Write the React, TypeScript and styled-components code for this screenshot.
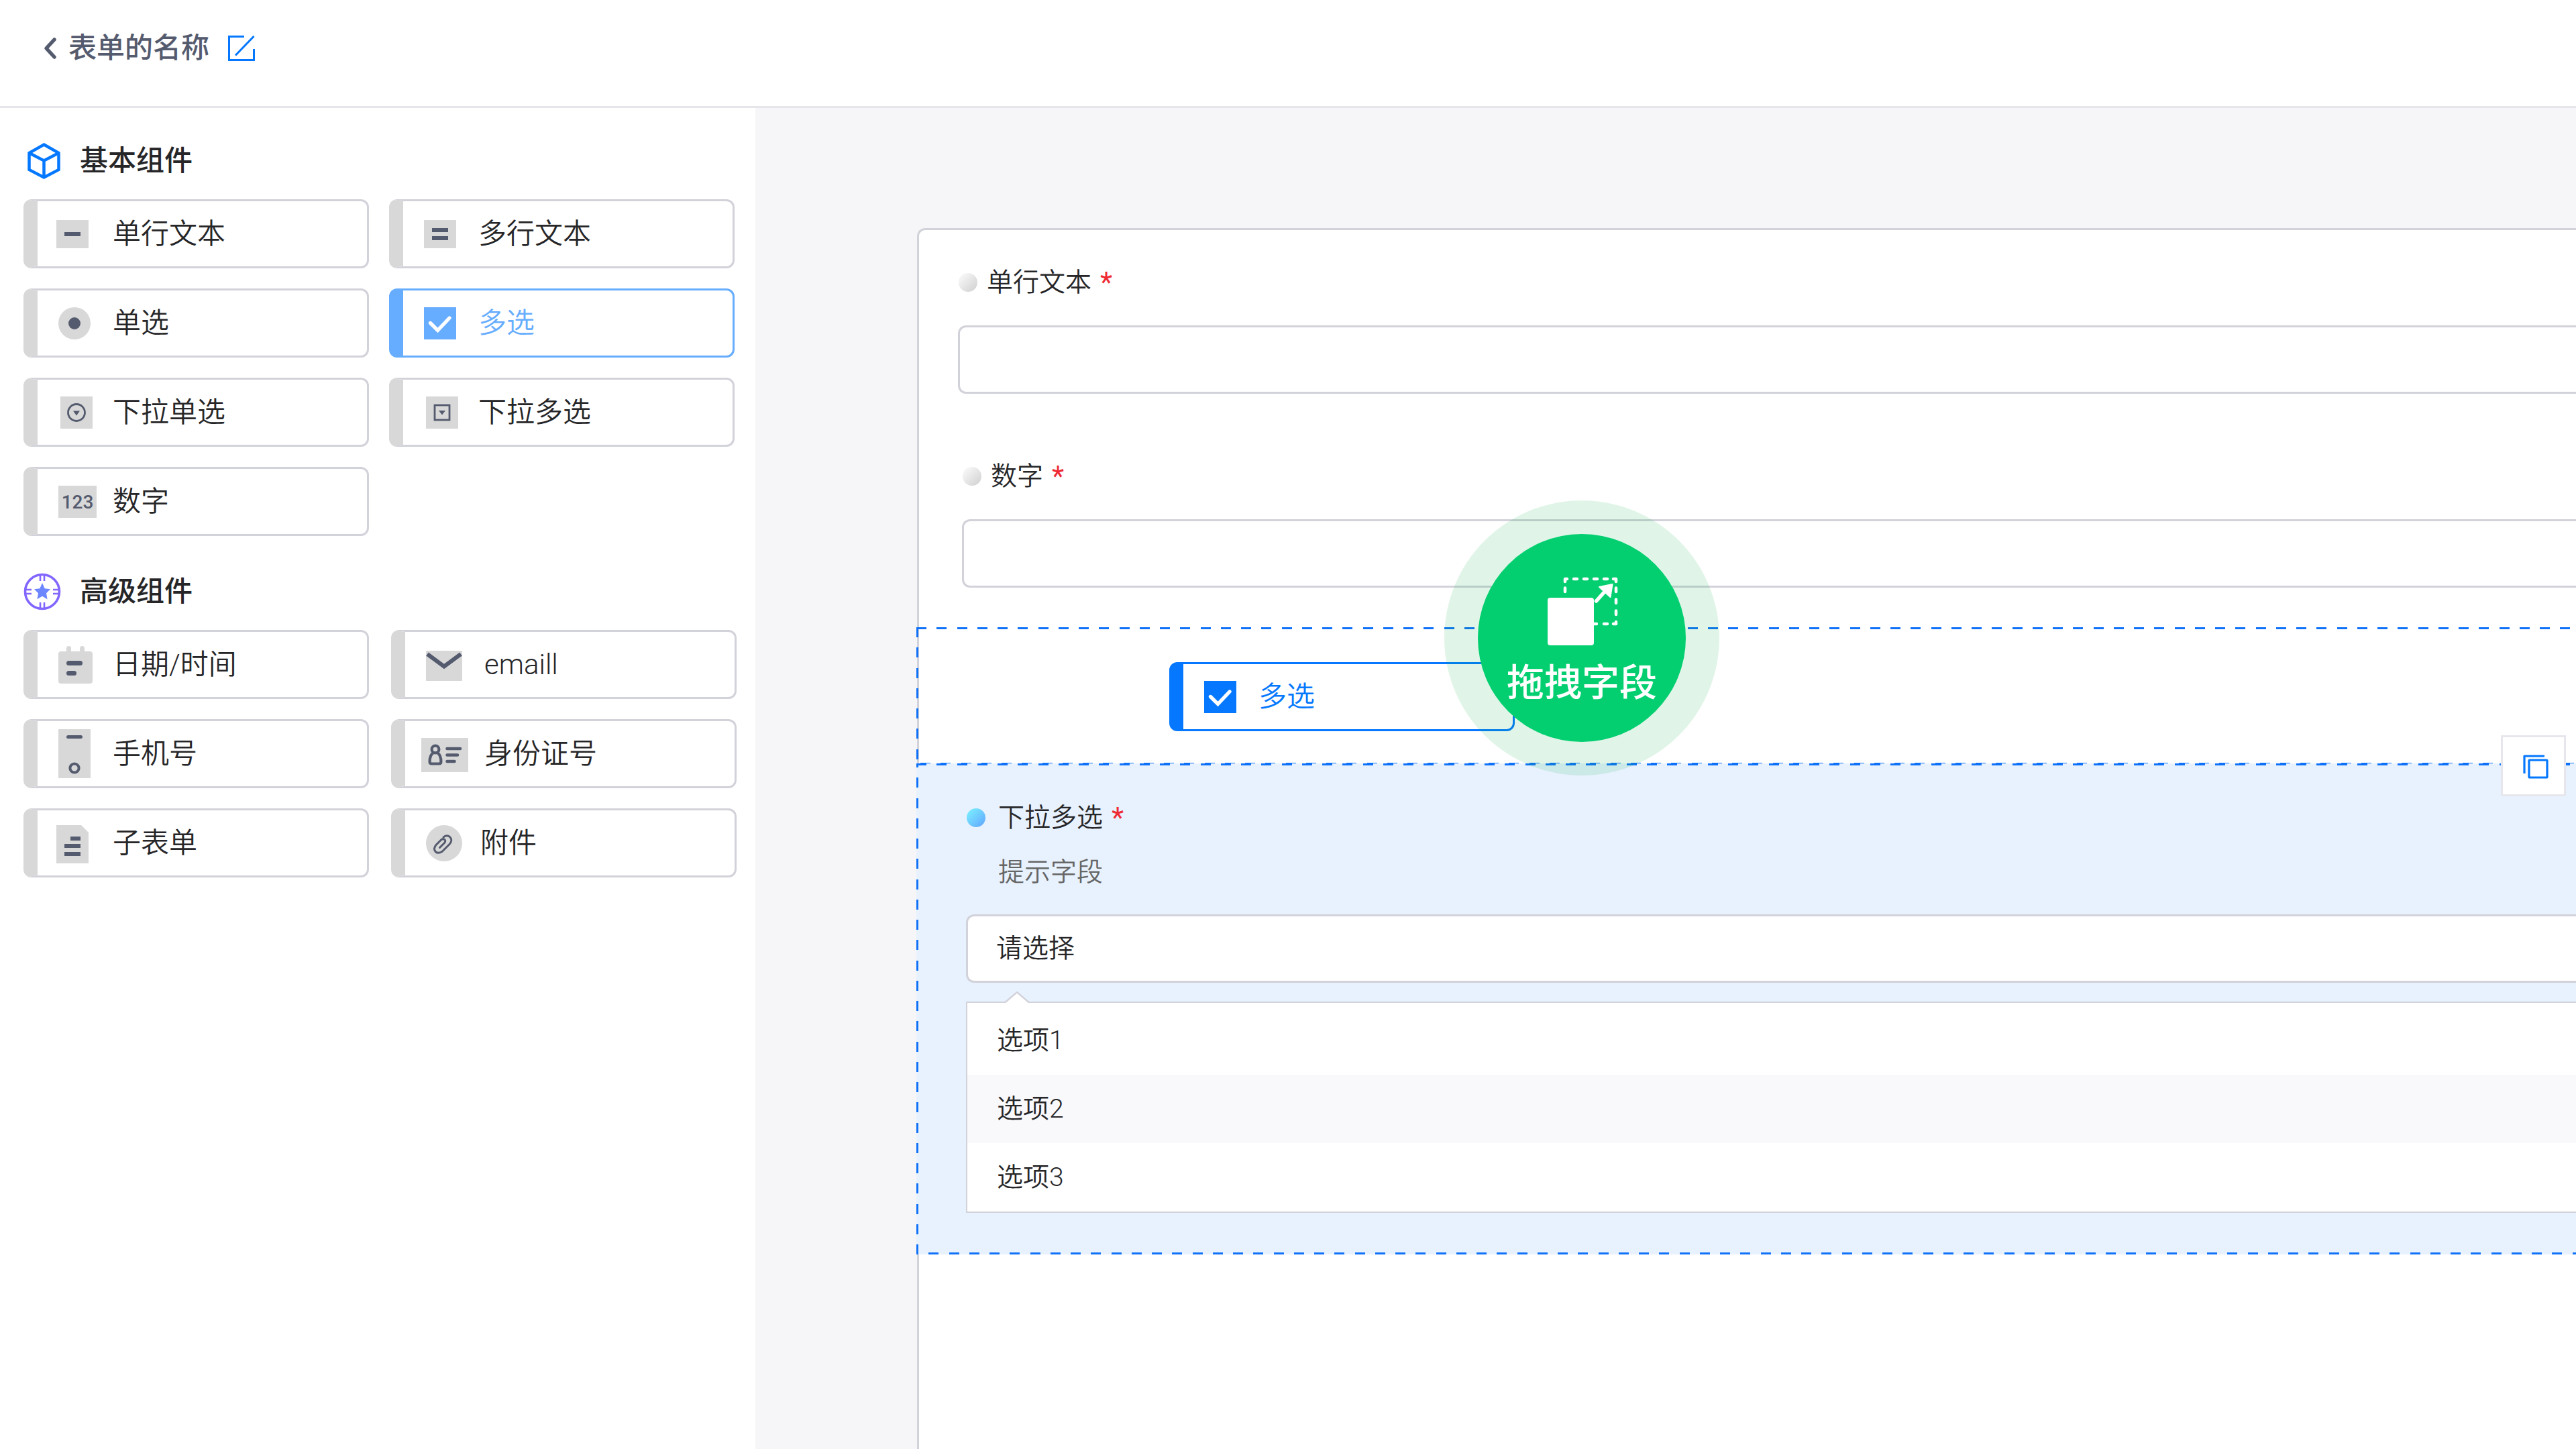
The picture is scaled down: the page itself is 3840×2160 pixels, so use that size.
import React from "react";
import styled, { createGlobalStyle, css } from "styled-components";

const ink = "#262628";
const slate = "#555b6e";
const blue = "#0578ff";
const dash = "#0f71f8";
const line = "#d2d2da";
const grey = "#d8d8d8";

const GlobalStyle = createGlobalStyle`
  * { box-sizing: border-box; }
  body {
    margin: 0;
    background: #ffffff;
    color: ${ink};
    font-family: Roboto, "Noto Sans CJK SC", sans-serif;
    overflow-x: hidden;
  }
  button, input, select { font: inherit; color: inherit; }
  h1, h2, p, ul { margin: 0; padding: 0; }
`;

const Page = styled.div`
  display: flex;
  flex-direction: column;
  min-height: 100vh;
`;

const Header = styled.header`
  display: flex;
  align-items: center;
  padding: 42px 64px 56px;
  border-bottom: 3px solid #e6e6ea;
  color: ${slate};
`;

const IconButton = styled.button`
  display: flex;
  align-items: center;
  height: 60px;
  padding: 0;
  border: 0;
  background: none;
  cursor: pointer;
`;

const FormName = styled.h1`
  margin: 0 27px 0 17px;
  font-size: 42px;
  line-height: 60px;
  font-weight: 500;
`;

const Body = styled.div`
  display: flex;
  flex: 1;
`;

const Sidebar = styled.aside`
  flex: none;
  display: flex;
  flex-direction: column;
  gap: 53px;
  width: 1126px;
  padding: 49px 28px 49px 35px;
`;

const Group = styled.section`
  display: flex;
  flex-direction: column;
  gap: 27px;
`;

const GroupTitle = styled.h2`
  display: flex;
  align-items: center;
  gap: 28px;
  font-size: 42px;
  line-height: 60px;
  font-weight: 500;
`;

const Grid = styled.div<{ $gap: number }>`
  display: grid;
  grid-template-columns: repeat(2, 515px);
  gap: 30px ${(p) => p.$gap}px;
`;

type Tone = "plain" | "active" | "dragging";
const tones = {
  plain: { bar: grey, border: line, text: ink },
  active: { bar: "#66adff", border: "#66adff", text: "#66adff" },
  dragging: { bar: blue, border: blue, text: blue },
};

const Card = styled.button<{ $tone: Tone }>`
  display: flex;
  align-items: center;
  gap: 13px;
  width: 515px;
  height: 103px;
  padding: 0 0 0 19px;
  border: 3px solid ${(p) => tones[p.$tone].border};
  border-left: 21px solid ${(p) => tones[p.$tone].bar};
  border-radius: 12px;
  background: #ffffff;
  color: ${(p) => tones[p.$tone].text};
  font-size: 42px;
  line-height: 60px;
  font-weight: 350;
  text-align: left;
  cursor: grab;
`;

const Canvas = styled.main`
  flex: 1;
  min-width: 0;
  display: flex;
  flex-direction: column;
  padding: 179px 0 0 241px;
  background: #f6f6f8;
`;

const Paper = styled.form`
  flex: 1;
  padding-top: 51px;
  border: 3px solid ${line};
  border-right: 0;
  border-bottom: 0;
  border-radius: 12px 0 0 0;
  background: #ffffff;
`;

const Field = styled.div<{ $inset: number }>`
  display: flex;
  flex-direction: column;
  gap: 37px;
  padding-left: ${(p) => p.$inset}px;
  margin-bottom: ${(p) => (p.$inset > 60 ? 59 : 96)}px;
`;

const FieldLabel = styled.label`
  display: flex;
  align-items: center;
  gap: 13px;
  padding-left: 1px;
  font-size: 39px;
  line-height: 54px;
  font-weight: 350;
`;

const Bullet = styled.span<{ $on?: boolean }>`
  width: 28px;
  height: 28px;
  margin-right: ${(p) => (p.$on ? 6 : 1)}px;
  border-radius: 50%;
  background: ${(p) =>
    p.$on
      ? "linear-gradient(135deg, #7df3ff, #5fa4ff)"
      : "linear-gradient(135deg, #f4f4f4 20%, #cfcfcf)"};
`;

const Star = styled.span`
  font-size: 42px;
  font-weight: 400;
  color: #ee2a33;
`;

const control = css`
  width: 100%;
  height: 102px;
  border: 3px solid ${line};
  border-right: 0;
  border-radius: 12px 0 0 12px;
  background: #ffffff;
  outline: none;
`;

const TextInput = styled.input`
  ${control}
  padding: 0 44px;
  font-size: 39px;
`;

const Select = styled.select`
  ${control}
  appearance: none;
  padding: 0 42px;
  font-size: 39px;
  font-weight: 350;
`;

/* Four dashes per tile keep the rhythm a touch over 30px. */
const stops = `${dash} 0 15px, transparent 15px 30px, ${dash} 30px 45px, transparent 45px 61px,
  ${dash} 61px 76px, transparent 76px 91px, ${dash} 91px 106px, transparent 106px 121px`;
const across = `linear-gradient(90deg, ${stops})`;
const down = `linear-gradient(180deg, ${stops})`;

const DropZone = styled.div`
  position: relative;
  margin-left: -4px;
  padding: 52px 0 50px 377px;
  background:
    ${across} 0 0 / 121px 3px repeat-x,
    ${across} 6px 100% / 121px 3px repeat-x,
    ${down} 0 0 / 3px 121px repeat-y;
`;

const Selected = styled.div`
  position: relative;
  margin: -2px 0 0 -4px;
  padding: 54px 0 62px 74px;
  background:
    ${across} 0 0 / 121px 3px repeat-x,
    ${across} -12px 100% / 121px 3px repeat-x,
    ${down} 0 -9px / 3px 121px repeat-y,
    #e8f2fe;
`;

const Hint = styled.p`
  margin: 27px 0 36px;
  padding-left: 48px;
  color: #666666;
  font-size: 39px;
  line-height: 54px;
  font-weight: 350;
`;

const Options = styled.ul`
  position: relative;
  margin-top: 28px;
  padding-top: 5px;
  border: 2px solid ${line};
  border-right: 0;
  background: #ffffff;
  list-style: none;
`;

const Pointer = styled.li`
  position: absolute;
  left: 52px;
  top: -18px;
  line-height: 0;
`;

const Option = styled.li`
  padding-left: 44px;
  font-size: 39px;
  line-height: 102px;
  font-weight: 350;

  &:nth-child(even) { background: #f9f9fc; }
`;

const CopyButton = styled.button`
  position: absolute;
  top: -42px;
  right: 15px;
  z-index: 2;
  display: flex;
  align-items: center;
  justify-content: center;
  width: 97px;
  height: 91px;
  padding: 0;
  border: 3px solid #e6e6ec;
  background: #ffffff;
  cursor: pointer;
`;

const Halo = styled.div`
  position: absolute;
  left: 787px;
  top: -189px;
  z-index: 1;
  padding: 50px;
  border-radius: 50%;
  background: rgba(0, 176, 66, 0.12);
  pointer-events: none;
`;

const Puck = styled.div`
  display: flex;
  flex-direction: column;
  align-items: center;
  gap: 11px;
  width: 310px;
  height: 310px;
  padding-top: 49px;
  border-radius: 50%;
  background: #03cf70;
  color: #ffffff;
  font-size: 56px;
  line-height: 64px;
  font-weight: 500;
`;

const glyphs: Record<string, React.ReactNode> = {
  line: (
    <>
      <rect x="9" y="19" width="48" height="42" fill={grey} />
      <rect x="21" y="37" width="24" height="6" fill={slate} />
    </>
  ),
  lines: (
    <>
      <rect x="12" y="19" width="48" height="42" fill={grey} />
      <rect x="24" y="31" width="24" height="6" fill={slate} />
      <rect x="24" y="43" width="24" height="6" fill={slate} />
    </>
  ),
  radio: (
    <>
      <circle cx="36" cy="40" r="24" fill={grey} />
      <circle cx="36" cy="40" r="9" fill={slate} />
    </>
  ),
  check: (
    <>
      <rect x="12" y="16" width="48" height="48" fill="currentColor" />
      <path d="M21.5 39.5L32.5 50.5L50 32" fill="none" stroke="#fff" strokeWidth="5.4" strokeLinecap="round" />
    </>
  ),
  dropOne: (
    <>
      <rect x="15" y="16" width="48" height="48" fill={grey} />
      <circle cx="39" cy="40" r="12.5" fill="none" stroke={slate} strokeWidth="2.8" />
      <path d="M34 37.5h10l-5 7z" fill={slate} />
    </>
  ),
  dropMany: (
    <>
      <rect x="15" y="16" width="48" height="48" fill={grey} />
      <rect x="28" y="29" width="22" height="22" fill="none" stroke={slate} strokeWidth="2.8" />
      <path d="M34 37h10l-5 6.5z" fill={slate} />
    </>
  ),
  number: (
    <>
      <rect x="12" y="16" width="57" height="48" fill={grey} />
      <text x="40.5" y="50" textAnchor="middle" fontSize="28" fontWeight="500" fill={slate}>123</text>
    </>
  ),
  date: (
    <>
      <rect x="12" y="20" width="51" height="48" rx="4" fill={grey} />
      <rect x="24" y="12" width="7" height="16" rx="3.5" fill={grey} />
      <rect x="44" y="12" width="7" height="16" rx="3.5" fill={grey} />
      <rect x="24" y="34" width="24" height="7" rx="3.5" fill={slate} />
      <rect x="24" y="49" width="15" height="7" rx="3.5" fill={slate} />
    </>
  ),
  phone: (
    <>
      <rect x="12" y="3" width="48" height="73" fill={grey} />
      <rect x="24" y="12" width="24" height="5" rx="2.5" fill={slate} />
      <circle cx="36" cy="61" r="6.6" fill="none" stroke={slate} strokeWidth="4" />
    </>
  ),
  subform: (
    <>
      <path d="M9 13h37l11 11v46H9z" fill={grey} />
      <rect x="30" y="30" width="15" height="6" fill={slate} />
      <rect x="21" y="41" width="24" height="6" fill={slate} />
      <rect x="21" y="53" width="24" height="6" fill={slate} />
    </>
  ),
  mail: (
    <>
      <rect x="12" y="19" width="54" height="45" fill={grey} />
      <path d="M14 24L39 42.5L64 24" fill="none" stroke={slate} strokeWidth="6" />
    </>
  ),
  idCard: (
    <>
      <rect x="5" y="16" width="70" height="51" fill={grey} />
      <g fill="none" stroke={slate} strokeWidth="4.2" strokeLinecap="round" strokeLinejoin="round">
        <circle cx="26" cy="33" r="5.4" />
        <path d="M22.5 38.5C19.5 40.5 17.6 45 17.6 51.5c0 2.2 1 3 3 3h10.8c2 0 3-.8 3-3C34.4 45 32.5 40.500 29.5 38.5" />
        <path d="M43.500 32h19.500M43.500 41.500h15.500M43.500 51h11" strokeWidth="4.500" />
      </g>
    </>
  ),
  clip: (
    <>
      <circle cx="39" cy="40" r="27" fill={grey} />
      <path
        d="M32.5 46.5L39.5 39.5C43 36 38.5 31.5 34.5 35L27.5 42C19.5 50 29 59 37 51.5L47 41.5C54.5 34 45 24.5 38 31"
        fill="none" stroke={slate} strokeWidth="3" strokeLinecap="round" />
    </>
  ),
};

const Glyph = ({ name, wide }: { name: string; wide?: boolean }) => (
  <svg width={wide ? 86 : 80} height="80" viewBox={`0 0 ${wide ? 86 : 80} 80`} aria-hidden="true">
    {glyphs[name]}
  </svg>
);

type Item = { icon: string; label: string; wide?: boolean; tone?: Tone };

const basic: Item[] = [
  { icon: "line", label: "单行文本" },
  { icon: "lines", label: "多行文本" },
  { icon: "radio", label: "单选" },
  { icon: "check", label: "多选", tone: "active" },
  { icon: "dropOne", label: "下拉单选" },
  { icon: "dropMany", label: "下拉多选" },
  { icon: "number", label: "数字" },
];

const advanced: Item[] = [
  { icon: "date", label: "日期/时间" },
  { icon: "mail", label: "emaill", wide: true },
  { icon: "phone", label: "手机号" },
  { icon: "idCard", label: "身份证号", wide: true },
  { icon: "subform", label: "子表单" },
  { icon: "clip", label: "附件" },
];

const ItemCard = ({ icon, label, wide, tone = "plain" }: Item) => (
  <Card type="button" $tone={tone}>
    <Glyph name={icon} wide={wide} />
    <span>{label}</span>
  </Card>
);

const Cube = () => (
  <svg width="56" height="60" viewBox="0 0 56 60" fill="none" stroke={blue} strokeWidth="4.5" aria-hidden="true">
    <path d="M30.5 5.5L52.5 18v25L30.5 54.5L8.5 43V18z" />
    <path d="M8.5 18L30.5 29.500L52.5 18M30.5 29.500v25" />
  </svg>
);

const Badge = () => (
  <svg width="56" height="60" viewBox="0 0 56 60" fill="none" aria-hidden="true">
    <circle cx="28" cy="30" r="25.5" stroke="#8266ff" strokeWidth="3.6" />
    <path d="M25 5v9M31 5v9M25 46v9M31 46v9M3 27h9M3 33h9M44 27h9M44 33h9" stroke="#8266ff" strokeWidth="2.6" />
    <path d="M28 17l3.7 8.3 8.3.9-6 6.1 1.6 9-7.6-4.5-7.6 4.5 1.6-9-6-6.1 8.3-.9z" fill="#6c86ff" />
  </svg>
);

const DragArt = () => (
  <svg width="140" height="130" viewBox="-3 0 140 130" fill="none" aria-hidden="true">
    <rect x="16" y="46" width="69" height="71" rx="4" fill="#fff" />
    <path
      d="M42 22V18H45M55 18h5M70 18h5M85 18h5M100 18h5M114 18h4V22M118 31.5v5.5M118 48.5v5.5M118 65.5v5.5M118 82v3H114M105 85h-5M89 85h-5M42 31.5v5.5"
      stroke="#fff" strokeWidth="4.5" strokeLinecap="round" strokeLinejoin="round" />
    <path d="M88.5 51L101 37" stroke="#fff" strokeWidth="5.5" strokeLinecap="round" />
    <path d="M93 30L112.5 26L109.5 45z" fill="#fff" stroke="#fff" strokeWidth="2" strokeLinejoin="round" />
  </svg>
);

export default function App() {
  return (
    <Page>
      <GlobalStyle />
      <Header>
        <IconButton type="button" aria-label="返回">
          <svg width="21" height="34" viewBox="0 0 21 34" fill="none" stroke={slate} strokeWidth="5.5" strokeLinecap="round" strokeLinejoin="round">
            <path d="M17 4L5 17L17 30" />
          </svg>
        </IconButton>
        <FormName>表单的名称</FormName>
        <IconButton type="button" aria-label="编辑名称">
          <svg width="42" height="42" viewBox="0 0 42 42" fill="none" stroke={blue} strokeWidth="3">
            <path d="M25 3.5H2.5V38.5H39.5V22M39.5 3L12 31.5" />
          </svg>
        </IconButton>
      </Header>
      <Body>
        <Sidebar>
          <Group>
            <GroupTitle><Cube />基本组件</GroupTitle>
            <Grid $gap={30}>
              {basic.map((item) => <ItemCard key={item.label} {...item} />)}
            </Grid>
          </Group>
          <Group>
            <GroupTitle><Badge />高级组件</GroupTitle>
            <Grid $gap={33}>
              {advanced.map((item) => <ItemCard key={item.label} {...item} />)}
            </Grid>
          </Group>
        </Sidebar>
        <Canvas>
          <Paper>
            <Field $inset={58}>
              <FieldLabel htmlFor="single-line"><Bullet />单行文本<Star>*</Star></FieldLabel>
              <TextInput id="single-line" type="text" />
            </Field>
            <Field $inset={64}>
              <FieldLabel htmlFor="number"><Bullet />数字<Star>*</Star></FieldLabel>
              <TextInput id="number" type="text" inputMode="numeric" />
            </Field>
            <DropZone>
              <ItemCard icon="check" label="多选" tone="dragging" />
              <Halo>
                <Puck>
                  <DragArt />
                  <span>拖拽字段</span>
                </Puck>
              </Halo>
            </DropZone>
            <Selected>
              <FieldLabel htmlFor="multi"><Bullet $on />下拉多选<Star>*</Star></FieldLabel>
              <Hint>提示字段</Hint>
              <Select id="multi"><option>请选择</option></Select>
              <Options>
                <Option>选项1</Option>
                <Option>选项2</Option>
                <Option>选项3</Option>
                <Pointer aria-hidden="true">
                  <svg width="44" height="22" viewBox="0 0 44 22">
                    <path d="M4 18L22 2L40 18V22H4z" fill="#fff" />
                    <path d="M4 17.5L22 2L40 17.5" fill="none" stroke={line} strokeWidth="2.4" />
                  </svg>
                </Pointer>
              </Options>
              <CopyButton type="button" aria-label="复制字段">
                <svg width="44" height="38" viewBox="-6 -2 44 38" fill="none" stroke={blue} strokeWidth="3.2" strokeLinejoin="round">
                  <path d="M2 28V2H32" />
                  <rect x="9" y="8" width="27" height="26" rx="1" />
                </svg>
              </CopyButton>
            </Selected>
          </Paper>
        </Canvas>
      </Body>
    </Page>
  );
}
